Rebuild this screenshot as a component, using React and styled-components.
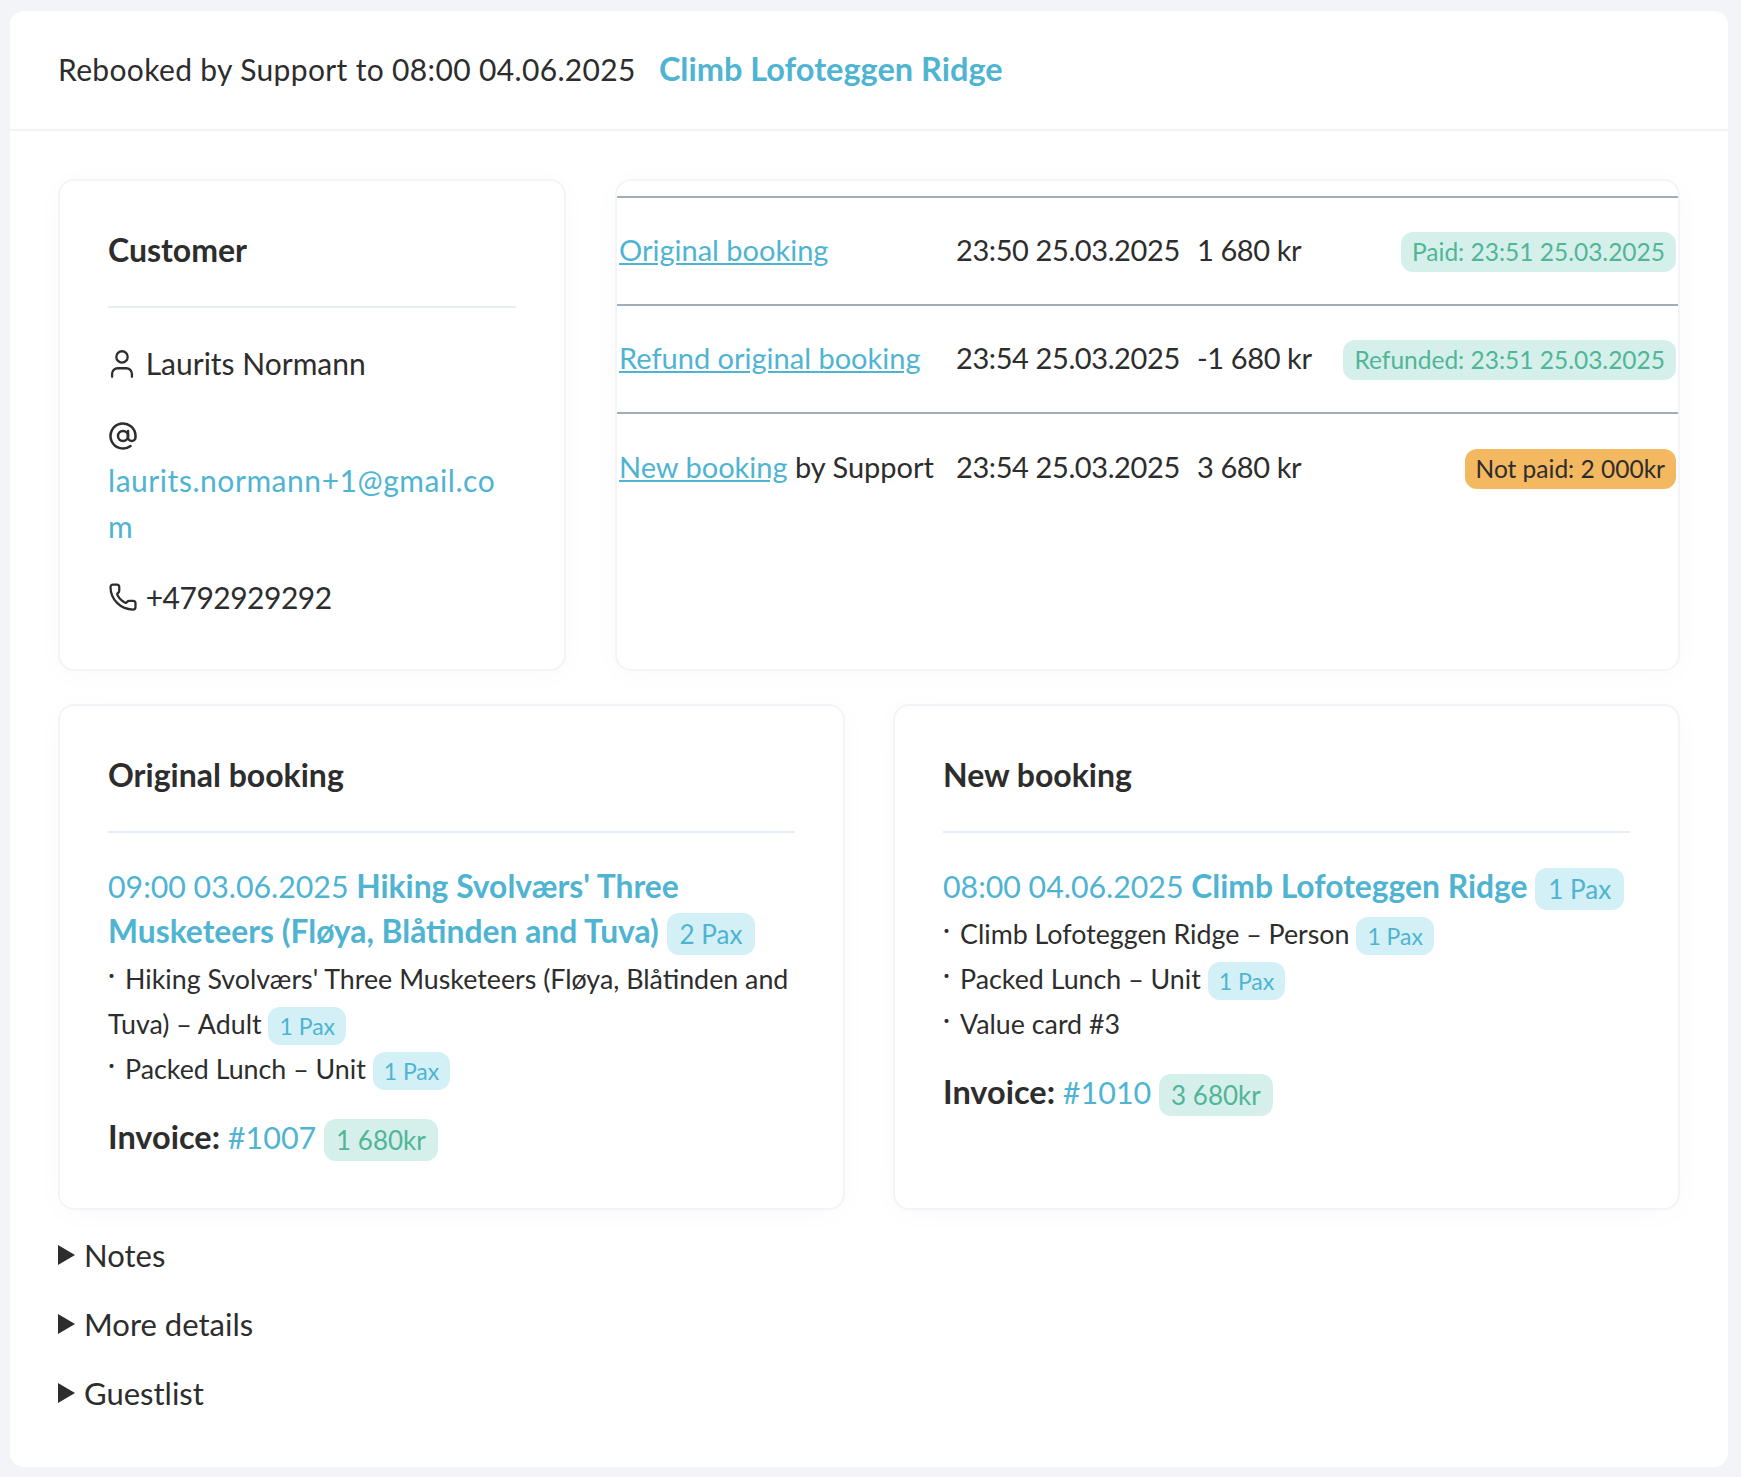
import styled, { createGlobalStyle } from "styled-components";
import { User, AtSign, Phone } from "lucide-react";

const GlobalStyle = createGlobalStyle`
  body {
    margin: 0;
    background: #f2f4f8;
    font-family: "Lato", "Liberation Sans", sans-serif;
    font-size: 30px;
    line-height: 46px;
    color: #2d2d2d;
  }
`;

export default function App() {
  return (
    <Page>
      <GlobalStyle />
      <Panel>
        <Header>
          <HeaderText>Rebooked by Support to 08:00 04.06.2025</HeaderText>
          <HeaderLink>Climb Lofoteggen Ridge</HeaderLink>
        </Header>
        <Content>
          <TopRow>
            <Card>
              <CardTitle>Customer</CardTitle>
              <ContactLine>
                <UserIcon size={34} strokeWidth={1.6} /> Laurits Normann
              </ContactLine>
              <ContactLine>
                <AtIcon size={30} strokeWidth={2} /> <EmailLink>laurits.normann+1@gmail.com</EmailLink>
              </ContactLine>
              <ContactLine>
                <PhoneIcon size={30} strokeWidth={1.8} /> <Digits>+4792929292</Digits>
              </ContactLine>
            </Card>
            <TableCard>
              <HistoryTable>
                <tbody>
                  <tr>
                    <td>
                      <UnderLink>Original booking</UnderLink>
                    </td>
                    <td>23:50 25.03.2025</td>
                    <td>1 680 kr</td>
                    <td>
                      <StatusBadge kind="green">Paid: 23:51 25.03.2025</StatusBadge>
                    </td>
                  </tr>
                  <tr>
                    <td>
                      <UnderLink>Refund original booking</UnderLink>
                    </td>
                    <td>23:54 25.03.2025</td>
                    <td>-1 680 kr</td>
                    <td>
                      <StatusBadge kind="green">Refunded: 23:51 25.03.2025</StatusBadge>
                    </td>
                  </tr>
                  <tr>
                    <td>
                      <UnderLink>New booking</UnderLink> by Support
                    </td>
                    <td>23:54 25.03.2025</td>
                    <td>3 680 kr</td>
                    <td>
                      <StatusBadge kind="orange">Not paid: 2 000kr</StatusBadge>
                    </td>
                  </tr>
                </tbody>
              </HistoryTable>
            </TableCard>
          </TopRow>
          <BottomRow>
            <Card>
              <CardTitle>Original booking</CardTitle>
              <TripTitle>
                09:00 03.06.2025 <b>Hiking Svolværs' Three Musketeers (Fløya, Blåtinden and Tuva)</b>{" "}
                <TitleBadge>2 Pax</TitleBadge>
              </TripTitle>
              <Item>
                <Bullet>·</Bullet>Hiking Svolværs' Three Musketeers (Fløya, Blåtinden and Tuva) – Adult{" "}
                <ItemBadge>1 Pax</ItemBadge>
              </Item>
              <Item>
                <Bullet>·</Bullet>Packed Lunch – Unit <ItemBadge>1 Pax</ItemBadge>
              </Item>
              <Invoice>
                <b>Invoice:</b> <Link>#1007</Link> <InvoiceBadge>1 680kr</InvoiceBadge>
              </Invoice>
            </Card>
            <Card>
              <CardTitle>New booking</CardTitle>
              <TripTitle>
                08:00 04.06.2025 <b>Climb Lofoteggen Ridge</b> <TitleBadge>1 Pax</TitleBadge>
              </TripTitle>
              <Item>
                <Bullet>·</Bullet>Climb Lofoteggen Ridge – Person <ItemBadge>1 Pax</ItemBadge>
              </Item>
              <Item>
                <Bullet>·</Bullet>Packed Lunch – Unit <ItemBadge>1 Pax</ItemBadge>
              </Item>
              <Item>
                <Bullet>·</Bullet>Value card #3
              </Item>
              <Invoice>
                <b>Invoice:</b> <Link>#1010</Link> <InvoiceBadge>3 680kr</InvoiceBadge>
              </Invoice>
            </Card>
          </BottomRow>
          <Fold>
            <summary>Notes</summary>
          </Fold>
          <Fold>
            <summary>More details</summary>
          </Fold>
          <Fold>
            <summary>Guestlist</summary>
          </Fold>
        </Content>
      </Panel>
    </Page>
  );
}

const Page = styled.div`
  box-sizing: border-box;
  min-height: 1477px;
  padding: 11px 13px 10px 10px;
`;

const Panel = styled.main`
  background: #fff;
  border-radius: 14px;
  height: 1456px;
`;

const Header = styled.header`
  display: flex;
  align-items: center;
  gap: 23px;
  height: 116px;
  padding: 0 48px 2px;
  border-bottom: 2px solid #f2f4f8;
`;

const HeaderText = styled.span`
  letter-spacing: 0.35px;
`;

const HeaderLink = styled.a`
  color: #4fb4d2;
  font-size: 32.5px;
  font-weight: 700;
`;

const Content = styled.div`
  padding: 48px 48px 0;
`;

const TopRow = styled.div`
  display: grid;
  grid-template-columns: 508px 1fr;
  grid-template-rows: 492px;
  gap: 49px;
`;

const BottomRow = styled.div`
  display: grid;
  grid-template-columns: 1fr 1fr;
  gap: 48px;
  height: 506px;
  margin: 33px 0 10px;
`;

const Card = styled.section`
  box-sizing: border-box;
  min-width: 0;
  padding: 46px 48px 0;
  background: #fff;
  border: 2px solid #f2f4f8;
  border-radius: 16px;
  box-shadow: 0 4px 30px rgba(30, 50, 80, 0.025);
`;

const TableCard = styled(Card)`
  padding: 15px 0 0;
`;

const CardTitle = styled.h3`
  margin: 0 0 32px;
  padding-bottom: 34px;
  border-bottom: 2px solid #e6edf5;
  font-size: 32px;
  line-height: 45px;
  font-weight: 700;
`;

const Link = styled.a`
  color: #4fb4d2;
`;

const UnderLink = styled(Link)`
  text-decoration: underline;
`;

const EmailLink = styled(Link)`
  letter-spacing: 0.55px;
`;

const ContactLine = styled.p`
  margin: 0 0 25px;
  overflow-wrap: break-word;
`;

const UserIcon = styled(User)`
  margin: 0 -1px 0 -3px;
  vertical-align: -6px;
`;

const AtIcon = styled(AtSign)`
  vertical-align: -5px;
`;

const PhoneIcon = styled(Phone)`
  vertical-align: -3px;
`;

const Digits = styled.span`
  letter-spacing: -0.5px;
`;

const HistoryTable = styled.table`
  width: 100%;
  border-collapse: collapse;
  table-layout: fixed;
  font-size: 29px;
  tr {
    height: 108px;
    border-top: 2px solid #a0aeb9;
  }
  td {
    padding: 0 2px 2px;
    white-space: nowrap;
  }
  td:nth-child(1) {
    width: 333px;
  }
  td:nth-child(2) {
    width: 237px;
    letter-spacing: -0.4px;
  }
  td:nth-child(3) {
    width: 136px;
    letter-spacing: -0.4px;
  }
  td:nth-child(4) {
    text-align: right;
  }
`;

const StatusBadge = styled.span`
  display: inline-block;
  padding: 0 11px;
  line-height: 40px;
  font-size: 24.5px;
  border-radius: 12px;
  background: ${(p) => (p.kind === "orange" ? "#f4b860" : "#d5f0ea")};
  color: ${(p) => (p.kind === "orange" ? "#2d2d2d" : "#52b598")};
`;

const TripTitle = styled.div`
  margin: -1px 0 2px;
  color: #4fb4d2;
  font-size: 30.3px;
  line-height: 45px;
  b {
    font-size: 31.8px;
  }
`;

const TitleBadge = styled.span`
  display: inline-block;
  padding: 0 13px;
  line-height: 42px;
  font-size: 26px;
  font-weight: 400;
  border-radius: 12px;
  background: #d2f0f5;
  color: #4fb4d2;
  vertical-align: -1px;
`;

const Item = styled.div`
  font-size: 26.8px;
  line-height: 45px;
`;

const Bullet = styled.span`
  display: inline-block;
  width: 17px;
  vertical-align: 5px;
  line-height: 20px;
`;

const ItemBadge = styled.span`
  display: inline-block;
  padding: 0 11px;
  line-height: 38px;
  font-size: 23px;
  border-radius: 12px;
  background: #d2f0f5;
  color: #4fb4d2;
  vertical-align: -1px;
`;

const Invoice = styled.div`
  margin-top: 22px;
  font-size: 30.5px;
  line-height: 45px;
  b {
    font-size: 32.5px;
  }
`;

const InvoiceBadge = styled.span`
  display: inline-block;
  padding: 0 12px;
  line-height: 42px;
  font-size: 26px;
  border-radius: 12px;
  background: #d5f0ea;
  color: #52b598;
  vertical-align: -1px;
`;

const Fold = styled.details`
  height: 69px;
  font-size: 31px;
  summary {
    display: flex;
    align-items: center;
    gap: 9px;
    height: 69px;
    list-style: none;
    cursor: pointer;
  }
  summary::before {
    content: "";
    border-style: solid;
    border-width: 10px 0 10px 17px;
    border-color: transparent transparent transparent #2d2d2d;
  }
`;
